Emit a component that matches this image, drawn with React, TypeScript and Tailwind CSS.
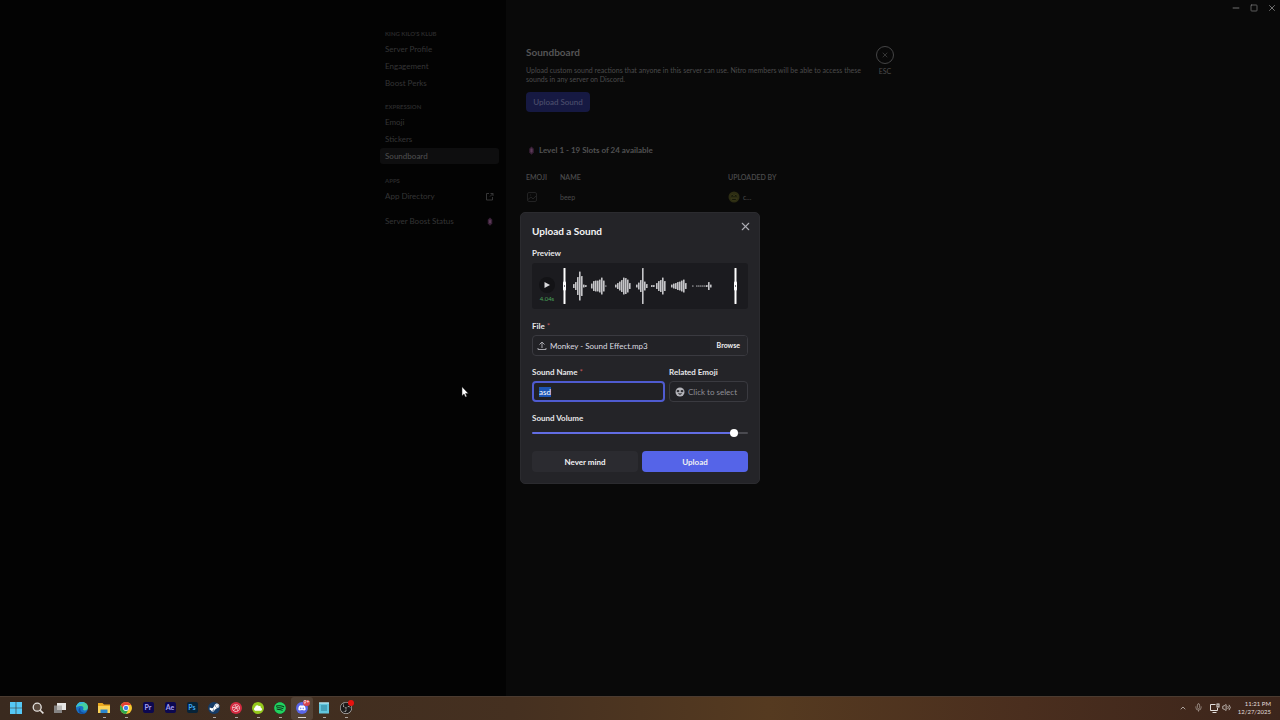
import { useState } from "react";
import type { CSSProperties, ReactNode } from "react";
import { FaCloud, FaDiscord, FaDribbble, FaSpotify, FaSteamSymbol } from "react-icons/fa";
import { SiObsstudio } from "react-icons/si";
import { ChevronUp, Mic, Minus, Square, Volume2, X } from "lucide-react";

const sections = [
  { title: "KING KILO'S KLUB", items: ["Server Profile", "Engagement", "Boost Perks"] },
  { title: "EXPRESSION", items: ["Emoji", "Stickers", "Soundboard"] },
];

// [x, height] of every bar in the sound preview
const bars = [
  [11, 4], [13, 8], [15, 18], [17, 29], [19, 20], [21, 3], [23, 2],
  [29, 5], [31, 10], [33, 11], [35, 11], [37, 13], [39, 17], [41, 11], [43, 1],
  [53, 3], [55, 6], [57, 9], [59, 12], [61, 17], [63, 16], [65, 13], [67, 6],
  [74, 3], [76, 7], [78, 12], [80, 36], [82, 9], [84, 4],
  [89, 2], [91, 2], [94, 6], [96, 10], [98, 12], [100, 17], [102, 10],
  [109, 3], [111, 5], [113, 6], [115, 8], [117, 9], [119, 11], [121, 13], [123, 6],
  [130, 1], [134, 1], [136, 1], [138, 1], [140, 1], [142, 1], [144, 2], [146, 8], [148, 3],
];

const Boost = ({ className }: { className: string }) => (
  <svg viewBox="0 0 8 12" className={className}>
    <path d="M4 0.5 7 3.5v5L4 11.5 1 8.5v-5z" fill="#3a2138" />
    <path d="M4 3 5.4 4.6v2.8L4 9 2.6 7.4V4.6z" fill="#5b3a57" />
  </svg>
);

const Sidebar = () => (
  <aside className="flex w-[506px] shrink-0 justify-end bg-[#030303] pr-[7px] pt-7">
    <nav className="flex w-[119px] flex-col text-[8px] text-[#353536]">
      {sections.map((section) => (
        <div key={section.title} className="mb-[10px]">
          <h2 className="mb-px px-[5px] text-[6px] leading-[12px] font-bold text-[#29292a]">{section.title}</h2>
          <div className="flex flex-col gap-px">
            {section.items.map((item) => (
              <a
                key={item}
                href="#"
                className={`flex h-4 items-center rounded-[3px] px-[5px] ${
                  item === "Soundboard" ? "bg-[#0e0e0f] font-medium text-[#4c4c4d]" : ""
                }`}
              >
                {item}
              </a>
            ))}
          </div>
        </div>
      ))}
      <h2 className="mt-px mb-px px-[5px] text-[6px] leading-[12px] font-bold text-[#29292a]">APPS</h2>
      <a href="#" className="flex h-4 items-center justify-between px-[5px]">
        App Directory
        <svg viewBox="0 0 9 9" className="size-[9px]" fill="none" stroke="#3c3c3d">
          <path d="M4 1.500H1.500v6.500h6V5M5.500 1.500H8V4M5 4.500l3-3" strokeWidth="0.900" />
        </svg>
      </a>
      <a href="#" className="mt-[9px] flex h-4 items-center justify-between px-[5px]">
        Server Boost Status
        <Boost className="h-[9px] w-2" />
      </a>
    </nav>
  </aside>
);

const SoundboardPage = () => (
  <main className="flex flex-1 gap-[10px] bg-[#090909] pl-5 pt-[45px] text-[#4b4b4c]">
    <div className="w-[340px]">
      <h1 className="text-[10px] leading-[14px] font-bold text-[#555556]">Soundboard</h1>
      <p className="mt-[7px] text-[7px] leading-[9px]">
        Upload custom sound reactions that anyone in this server can use. Nitro members will be able to access these
        sounds in any server on Discord.
      </p>
      <button className="mt-2 h-5 w-16 rounded-[4px] bg-[#161942] text-[8px] font-medium text-[#4d4f6d]">
        Upload Sound
      </button>
      <h2 className="mt-8 flex items-center gap-[3px] text-[8px] leading-[12px] font-bold text-[#515152]">
        <Boost className="ml-px h-[9px] w-[9px]" />
        Level 1 - 19 Slots of 24 available
      </h2>
      <table className="mt-[15px] w-full table-fixed text-left">
        <thead>
          <tr className="h-3 text-[7px] leading-[12px]">
            <th className="w-[34px] font-semibold">EMOJI</th>
            <th className="w-[168px] font-semibold">NAME</th>
            <th className="font-semibold">UPLOADED BY</th>
          </tr>
        </thead>
        <tbody>
          <tr className="h-7 text-[7px]">
            <td>
              <svg viewBox="0 0 12 12" className="size-3" fill="none" stroke="#222223">
                <rect x="1.5" y="1.5" width="9" height="9" rx="1.5" />
                <path d="M2 8.5 5 6l2 2 3-3M4 4h1" />
              </svg>
            </td>
            <td>beep</td>
            <td>
              <div className="flex items-center gap-[3px]">
                <svg viewBox="0 0 12 12" className="size-3">
                  <circle cx="6" cy="6" r="5.5" fill="#2d2d13" />
                  <path d="M2.5 5.5 4 3l2 2 2-2 1.5 2.5M3 7.5h6L7.5 9.5h-3z" fill="#15180a" stroke="#46451f" strokeWidth="0.5" />
                </svg>
                c...
              </div>
            </td>
          </tr>
        </tbody>
      </table>
    </div>
    <button className="flex h-8 w-[18px] flex-col items-center gap-[3px] text-[7px] leading-[8px]">
      <span className="mt-px flex size-[18px] shrink-0 items-center justify-center rounded-full border border-[#454546]">
        <X size={8} />
      </span>
      ESC
    </button>
  </main>
);

const Waveform = () => (
  <svg viewBox="0 0 176 38" className="h-[38px] w-[176px]">
    {bars.map(([x, h]) => (
      <rect key={x} x={x} y={19 - h / 2} width="1.6" height={h} rx="0.5" fill="#c6c6c9" />
    ))}
    <g fill="#ffffff">
      <rect x="1.5" y="1" width="2" height="36" rx="0.5" />
      <rect x="1" y="14.5" width="3" height="9" rx="1" />
      <rect x="172.5" y="1" width="2" height="36" rx="0.5" />
      <rect x="172" y="14.5" width="3" height="9" rx="1" />
    </g>
    <path d="M2.5 18v2M173.5 18v2" stroke="#77777d" />
  </svg>
);

const labelClass = "block text-[8px] leading-[12px] font-bold text-[#e6e6e9]";

const UploadDialog = () => {
  const [name, setName] = useState("asd");
  const [volume, setVolume] = useState(95);

  return (
    <div
      role="dialog"
      aria-labelledby="dialog-title"
      className="w-60 rounded-[5px] border border-[#2b2b2f] bg-[#242428] p-[11px] text-[8px] text-[#dcdce0]"
    >
      <div className="flex h-[15px] items-start justify-between">
        <h2 id="dialog-title" className="text-[10px] leading-[14px] font-bold text-[#f4f4f5]">
          Upload a Sound
        </h2>
        <button aria-label="Close" className="-mt-1 -mr-1 text-[#acacb2]">
          <X size={13} strokeWidth={2} />
        </button>
      </div>

      <div className={`mt-2 ${labelClass}`}>Preview</div>
      <div className="mt-1 flex h-[46px] items-center gap-[7px] rounded-[3px] bg-[#1b1b1f] pl-[7px]">
        <div className="flex w-4 flex-col items-center">
          <button aria-label="Play" className="mt-[7px] flex size-4 items-center justify-center rounded-full bg-[#131316]">
            <svg viewBox="0 0 8 8" className="size-2">
              <path d="M1.500 1v6L7 4z" fill="#d8d8db" />
            </svg>
          </button>
          <span className="mt-[2px] text-[6px] leading-[8px] text-[#4aa45a]">4.04s</span>
        </div>
        <Waveform />
      </div>

      <label htmlFor="file" className={`mt-[11px] ${labelClass}`}>
        File <span className="font-normal text-[#c25559]">*</span>
      </label>
      <div className="mt-[3px] flex h-[21px] items-center rounded-[4px] border border-[#3a3a40] bg-[#222226] pl-1">
        <svg viewBox="0 0 10 10" className="size-[10px]" fill="none" stroke="#a6a6ac">
          <path d="M5 7V1M2.500 3.500 5 1l2.500 2.500M1 7v1.500h8V7" />
        </svg>
        <input
          id="file"
          readOnly
          value="Monkey - Sound Effect.mp3"
          className="ml-[3px] min-w-0 flex-1 bg-transparent outline-none"
        />
        <button className="h-full rounded-r-[3px] bg-[#26262a] px-[7px] text-[7px] font-bold text-[#f1f1f3]">
          Browse
        </button>
      </div>

      <div className="mt-[10px] flex gap-1">
        <div className="flex-1">
          <label htmlFor="sound-name" className={labelClass}>
            Sound Name <span className="font-normal text-[#c25559]">*</span>
          </label>
          <input
            id="sound-name"
            autoFocus
            value={name}
            onFocus={(e) => e.target.select()}
            onChange={(e) => setName(e.target.value)}
            className="mt-[3px] h-[21px] w-full rounded-[4px] border-2 border-[#4f5bd0] bg-[#212125] px-[5px] outline-none selection:bg-[#1c55b5] selection:text-white"
          />
        </div>
        <div className="w-[79px]">
          <label htmlFor="emoji" className={labelClass}>
            Related Emoji
          </label>
          <button
            id="emoji"
            className="mt-[3px] flex h-[21px] w-full items-center gap-[3px] rounded-[4px] border border-[#3a3a40] bg-[#222226] px-[5px] text-[#8f8f96]"
          >
            <svg viewBox="0 0 10 10" className="size-[10px] shrink-0">
              <circle cx="5" cy="5" r="4.500" fill="#b4b4ba" />
              <path d="M2 3.500h2v1.200H2zM6 3.500h2v1.200H6zM3.200 6.500q1.800 1.800 3.600 0" fill="#242428" stroke="#242428" strokeWidth="0.600" />
            </svg>
            <span className="whitespace-nowrap">Click to select</span>
          </button>
        </div>
      </div>

      <label htmlFor="volume" className={`mt-[10px] ${labelClass}`}>
        Sound Volume
      </label>
      <input
        id="volume"
        type="range"
        min={0}
        max={100}
        value={volume}
        onChange={(e) => setVolume(Number(e.target.value))}
        style={{ "--fill": `${volume}%` } as CSSProperties}
        className="mt-[5px] block h-2 w-full appearance-none bg-transparent [&::-webkit-slider-runnable-track]:h-[2px] [&::-webkit-slider-runnable-track]:rounded-full [&::-webkit-slider-runnable-track]:bg-[linear-gradient(to_right,#626de4_var(--fill),#4a4a50_var(--fill))] [&::-webkit-slider-thumb]:-mt-[3px] [&::-webkit-slider-thumb]:size-2 [&::-webkit-slider-thumb]:appearance-none [&::-webkit-slider-thumb]:rounded-full [&::-webkit-slider-thumb]:bg-white"
      />

      <div className="mt-[14px] grid grid-cols-2 gap-1 font-bold text-[#f1f1f3]">
        <button className="h-[21px] rounded-[4px] bg-[#2b2b30]">Never mind</button>
        <button className="h-[21px] rounded-[4px] bg-[#5564e8]">Upload</button>
      </div>
    </div>
  );
};

const AdobeIcon = ({ text, className }: { text: string; className: string }) => (
  <span className={`flex size-[11px] items-center justify-center rounded-[2px] text-[7px] leading-none font-bold ${className}`}>
    {text}
  </span>
);

const Disc = ({ className, children }: { className: string; children: ReactNode }) => (
  <span className={`flex size-3 items-center justify-center rounded-full ${className}`}>{children}</span>
);

const taskbarApps: { name: string; running?: boolean; active?: boolean; icon: ReactNode }[] = [
  {
    name: "Start",
    icon: (
      <svg viewBox="0 0 12 12" className="size-3" fill="#55c8f5">
        <path d="M0 0h5.700v5.700H0zM6.300 0H12v5.700H6.300zM0 6.300h5.700V12H0zM6.300 6.300H12V12H6.300z" />
      </svg>
    ),
  },
  {
    name: "Search",
    icon: (
      <svg viewBox="0 0 12 12" className="size-3" fill="none" stroke="#e5e2df" strokeWidth="1.300">
        <circle cx="5.200" cy="5.200" r="4" fill="#5b4b3f" />
        <path d="m8.200 8.200 3.200 3.200" strokeWidth="1.600" />
      </svg>
    ),
  },
  {
    name: "Task View",
    icon: (
      <svg viewBox="0 0 12 12" className="size-3">
        <path d="M0 3.500h8v7.500H0z" fill="#858382" />
        <path d="M3 1h9v7H3z" fill="#e6e5e4" />
        <path d="M3 3.500h5V8H3z" fill="#b9b7b5" />
      </svg>
    ),
  },
  {
    name: "Edge",
    icon: (
      <svg viewBox="0 0 12 12" className="size-3">
        <circle cx="6" cy="6" r="6" fill="#1a72c9" />
        <path d="M.1 5.500C.6 2 3 0 6.100 0 9.500 0 12 2.400 12 5.200c0 2-1.500 3.200-3.200 3.200-1.400 0-2-.6-1.600-1.200.8-1.500-.2-3.200-2.200-3.200C2.800 4 1 4.500.1 5.500z" fill="#45cfa1" />
        <path d="M.1 5.500C.6 2 3 0 6.100 0 7 0 8 .3 8.800.700 6 1.500 2 2.500.1 5.500z" fill="#35b5e4" />
        <path d="M4.500 5.500c-1 2.200.5 5 3.500 5.200 1 0 2-.3 2.800-.9-2 3-6 2.700-7.700.5C1.900 8.500 2.500 6.200 4.500 5.500z" fill="#124f9c" />
      </svg>
    ),
  },
  {
    name: "File Explorer",
    running: true,
    icon: (
      <svg viewBox="0 0 12 12" className="size-3">
        <path d="M0 1h4.500L6 2.500h6V11H0z" fill="#e9a820" />
        <path d="M0 4h12v7H0z" fill="#fbd357" />
        <path d="M2.500 7.500h7V11h-7z" fill="#2b86cd" />
      </svg>
    ),
  },
  {
    name: "Chrome",
    running: true,
    icon: (
      <svg viewBox="0 0 12 12" className="size-3">
        <circle cx="6" cy="6" r="6" fill="#f7c82d" />
        <path d="M.8 3A6 6 0 0 1 11.200 3H6L3.400 7.500z" fill="#e34133" />
        <path d="M.8 3A6 6 0 0 0 6 12l2.600-4.500H3.400z" fill="#2da94f" />
        <circle cx="6" cy="6" r="2.900" fill="#fff" />
        <circle cx="6" cy="6" r="2.200" fill="#3f7de8" />
      </svg>
    ),
  },
  { name: "Premiere Pro", icon: <AdobeIcon text="Pr" className="bg-[#0c0850] text-[#a6a1f5]" /> },
  { name: "After Effects", icon: <AdobeIcon text="Ae" className="bg-[#0c0850] text-[#a6a1f5]" /> },
  { name: "Photoshop", icon: <AdobeIcon text="Ps" className="bg-[#072338] text-[#3ea9f4]" /> },
  {
    name: "Steam",
    running: true,
    icon: <Disc className="bg-[#153b66] text-white"><FaSteamSymbol size={11} /></Disc>,
  },
  {
    name: "Recorder",
    running: true,
    icon: <Disc className="bg-[#d42b41] text-[#f6dfe0]"><FaDribbble size={8} /></Disc>,
  },
  {
    name: "Cloud",
    running: true,
    icon: <Disc className="bg-[#94c81c] text-white"><FaCloud size={8} /></Disc>,
  },
  {
    name: "Spotify",
    running: true,
    icon: <Disc className="bg-[#10351d] text-[#22d15f]"><FaSpotify size={12} /></Disc>,
  },
  {
    name: "Discord",
    active: true,
    icon: (
      <span className="relative">
        <Disc className="bg-[#5966e8] text-white"><FaDiscord size={8} /></Disc>
        <span className="absolute -top-[2px] -right-[2px] flex h-[6px] w-[7px] items-center justify-center rounded-full bg-[#d9434b] text-[5px] leading-none text-white">
          9+
        </span>
      </span>
    ),
  },
  {
    name: "Notepad",
    running: true,
    icon: (
      <svg viewBox="0 0 12 12" className="size-3">
        <rect x="1" y="0.500" width="10" height="11" rx="0.500" fill="#62c5dc" />
        <path d="M1 1h10" stroke="#d8eef3" />
        <path d="M3 4h6M3 6h6M3 8h6" stroke="#1d6d87" strokeWidth="0.800" />
      </svg>
    ),
  },
  {
    name: "OBS Studio",
    running: true,
    icon: (
      <span className="relative">
        <Disc className="bg-[#1d1b1a] text-[#d3d0ce]"><SiObsstudio size={12} /></Disc>
        <span className="absolute -top-[2px] -right-[2px] size-[6px] rounded-full bg-[#e8120f]" />
      </span>
    ),
  },
];

const Taskbar = () => (
  <footer className="flex h-6 shrink-0 items-center justify-between border-t border-[#4b3b30] bg-[linear-gradient(to_right,#3a2a1f,#453020_40%,#553a20_60%,#4a2e1e_80%,#3c251b)] pl-[5px] pr-[9px] text-[#e3dfdc]">
    <div className="flex h-full">
      {taskbarApps.map((app) => (
        <button
          key={app.name}
          aria-label={app.name}
          className={`relative flex h-full w-[22px] items-center justify-center rounded-[3px] pb-[2px] ${
            app.active ? "bg-white/10" : ""
          }`}
        >
          {app.icon}
          {app.running && <span className="absolute bottom-[2px] h-px w-[3px] bg-[#aaa39d]" />}
          {app.active && <span className="absolute bottom-[2px] h-px w-2 bg-[#d8d3cf]" />}
        </button>
      ))}
    </div>
    <div className="flex items-center pb-[2px]">
      <ChevronUp size={8} />
      <Mic size={9} className="ml-[7px] text-[#a89c94]" />
      <svg viewBox="0 0 11 10" className="ml-[6px] h-[10px] w-[11px]" fill="none" stroke="currentColor">
        <path d="M6.500 1.500h-5v6h7V5M3.500 9.500h4" />
        <rect x="8" y="1" width="2" height="3" />
      </svg>
      <Volume2 size={9} className="ml-[2px]" />
      <div className="w-10 text-right text-[6px] leading-[8px]">
        <div>11:21 PM</div>
        <div>12/27/2025</div>
      </div>
    </div>
  </footer>
);

export default function App() {
  return (
    <div className="relative flex h-screen flex-col overflow-hidden bg-black font-[Lato,sans-serif]">
      <div className="relative flex min-h-0 flex-1">
        <Sidebar />
        <SoundboardPage />

        <div className="absolute top-[3px] right-[3px] flex gap-[9px] text-[#858586]">
          <button aria-label="Minimize"><Minus size={10} /></button>
          <button aria-label="Maximize"><Square size={8} /></button>
          <button aria-label="Close window"><X size={10} /></button>
        </div>

        <div className="absolute inset-0 flex items-center justify-center">
          <UploadDialog />
        </div>
      </div>
      <Taskbar />

      {/* Mouse pointer */}
      <svg viewBox="0 0 8 12" className="pointer-events-none absolute top-[386px] left-[461px] h-3 w-2">
        <path d="M1 .8v9l2-1.900 1.400 3.200 1.400-.6L4.500 7.500h2.800z" fill="#fff" stroke="#222" strokeWidth="0.500" />
      </svg>
    </div>
  );
}
